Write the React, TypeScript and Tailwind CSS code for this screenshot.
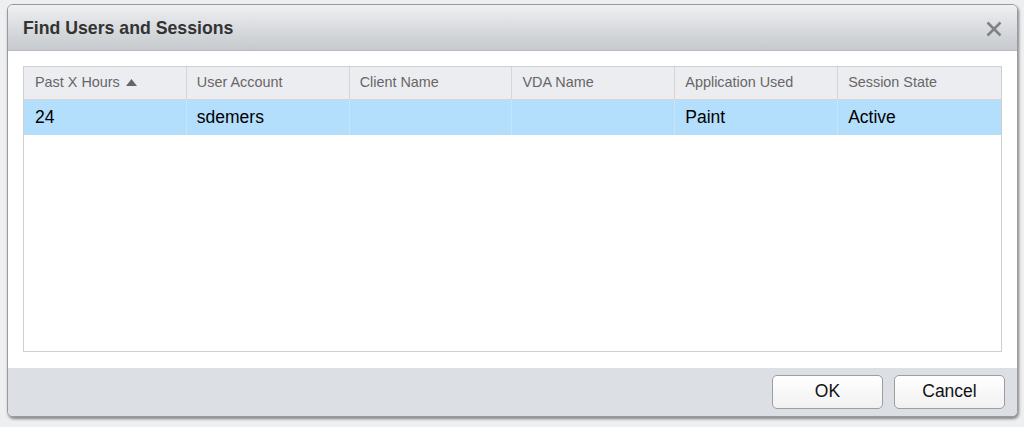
import React from "react";

const cols = ["Past X Hours", "User Account", "Client Name", "VDA Name", "Application Used", "Session State"];
const row = ["24", "sdemers", "", "", "Paint", "Active"];

export default function App() {
  return (
    <div
      className="w-[1024px] h-[427px] bg-[#eeeff0] overflow-hidden pt-[4px] pl-[7px]"
      style={{ fontFamily: '"Liberation Sans", Arial, sans-serif' }}
    >
      <div className="w-[1011px] h-[413px] rounded-[6px] border border-[#9a9a9a] shadow-[1px_2px_3px_rgba(0,0,0,0.45)] overflow-hidden flex flex-col bg-white">
        <div className="h-[46px] shrink-0 flex items-center justify-between pl-[15px] pr-[15px] bg-gradient-to-b from-[#eef0f2] to-[#c6c9cd] border-b border-[#b9bcc0]">
          <span className="text-[17.7px] font-bold text-[#333] mt-[1px]">Find Users and Sessions</span>
          <svg width="16" height="16" viewBox="0 0 16 16" className="mt-[2px]">
            <path d="M1.5 1.5 L14.5 14.5 M14.5 1.5 L1.5 14.5" stroke="#808285" strokeWidth="2.6" strokeLinecap="butt" />
          </svg>
        </div>
        <div className="flex-1 px-[15px] pt-[15px] pb-[16px] bg-white">
          <div className="h-full border border-[#cfcfcf] bg-white">
            <div className="grid grid-cols-6 h-[33px] bg-[#ecedf0] border-b border-[#d6d6d6]">
              {cols.map((c, i) => (
                <div
                  key={c}
                  className={`flex items-center ${i === 0 ? "pl-[11px]" : "pl-[10px]"} text-[14.4px] text-[#666] ${i < 5 ? "border-r border-[#d6d6d6]" : ""}`}
                >
                  {c}
                  {i === 0 && (
                    <svg width="11" height="7" viewBox="0 0 11 7" className="ml-[6px] mb-[2px]">
                      <path d="M0 7 L5.5 0 L11 7 Z" fill="#666" />
                    </svg>
                  )}
                </div>
              ))}
            </div>
            <div className="grid grid-cols-6 h-[35px] bg-[#b3dffc]">
              {row.map((v, i) => (
                <div
                  key={i}
                  className={`flex items-center ${i === 0 ? "pl-[11px]" : "pl-[10px]"} text-[17.5px] text-black ${i < 5 ? "border-r border-dotted border-[#d8ecf8]" : ""}`}
                >
                  {v}
                </div>
              ))}
            </div>
          </div>
        </div>
        <div className="h-[48px] shrink-0 bg-[#dce0e4] flex items-center justify-end gap-[11px] pr-[12px] pb-[1px]">
          <button className="w-[111px] h-[34px] rounded-[5px] border border-[#9d9d9d] bg-gradient-to-b from-white to-[#f1f1f1] text-[17.5px] text-[#111]">
            OK
          </button>
          <button className="w-[111px] h-[34px] rounded-[5px] border border-[#9d9d9d] bg-gradient-to-b from-white to-[#f1f1f1] text-[17.5px] text-[#111]">
            Cancel
          </button>
        </div>
      </div>
    </div>
  );
}
